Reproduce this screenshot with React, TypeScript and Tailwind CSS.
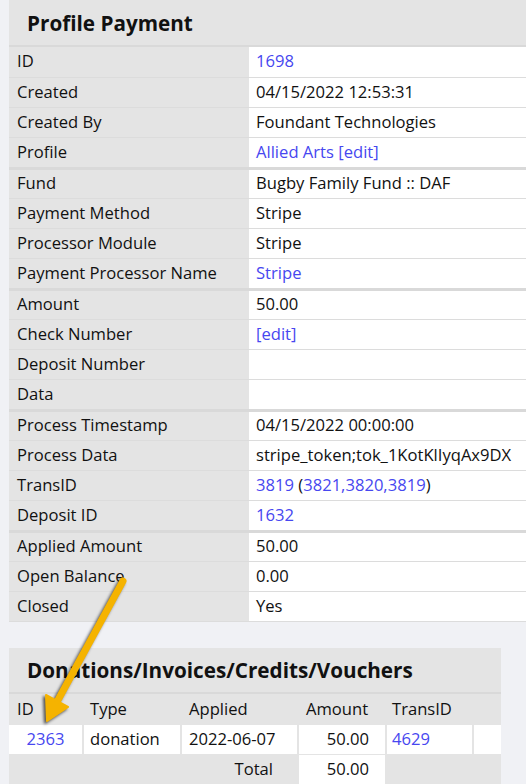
import React from "react";

interface Row {
  label: string;
  value: React.ReactNode;
  groupEnd?: boolean;
}

const Link: React.FC<{ children: React.ReactNode }> = ({ children }) => (
  <span className="text-[#4747f0]">{children}</span>
);

const rows: Row[] = [
  { label: "ID", value: <Link>1698</Link> },
  { label: "Created", value: "04/15/2022 12:53:31" },
  { label: "Created By", value: "Foundant Technologies" },
  { label: "Profile", value: <Link>Allied Arts [edit]</Link>, groupEnd: true },
  { label: "Fund", value: "Bugby Family Fund :: DAF" },
  { label: "Payment Method", value: "Stripe" },
  { label: "Processor Module", value: "Stripe" },
  { label: "Payment Processor Name", value: <Link>Stripe</Link>, groupEnd: true },
  { label: "Amount", value: "50.00" },
  { label: "Check Number", value: <Link>[edit]</Link> },
  { label: "Deposit Number", value: "" },
  { label: "Data", value: "", groupEnd: true },
  { label: "Process Timestamp", value: "04/15/2022 00:00:00" },
  { label: "Process Data", value: "stripe_token;tok_1KotKlIyqAx9DX" },
  {
    label: "TransID",
    value: (
      <>
        <Link>3819</Link> (<Link>3821,3820,3819</Link>)
      </>
    ),
  },
  { label: "Deposit ID", value: <Link>1632</Link>, groupEnd: true },
  { label: "Applied Amount", value: "50.00" },
  { label: "Open Balance", value: "0.00" },
  { label: "Closed", value: "Yes" },
];

const Arrow: React.FC = () => (
  <svg
    className="absolute left-0 top-0 pointer-events-none"
    width="526"
    height="784"
    viewBox="0 0 526 784"
    style={{ filter: "drop-shadow(-2px 2px 1.5px rgba(0,0,0,0.65))" }}
  >
    <line x1="123" y1="581" x2="58" y2="700" stroke="#f5b300" strokeWidth="7" strokeLinecap="round" />
    <polygon points="47,721 46,695 68,707" fill="#f5b300" stroke="#f5b300" strokeWidth="2" strokeLinejoin="round" />
  </svg>
);

export default function App() {
  return (
    <div className="relative w-[526px] h-[784px] overflow-hidden bg-[#f0f1f5] font-['Open_Sans',sans-serif] text-[16.6px] text-[#111]">
      <div className="pl-[9px]">
        {/* Profile Payment */}
        <section className="w-[560px]">
          <div className="h-[47px] bg-[#e4e4e4] border-b-2 border-[#d9d9d9] pl-[18px] pt-[3px] flex items-center">
            <h2 className="text-[20.7px] font-bold">Profile Payment</h2>
          </div>
          <table className="w-full table-fixed border-collapse">
            <colgroup>
              <col className="w-[240px]" />
              <col />
            </colgroup>
            <tbody>
              {rows.map((r) => (
                <tr
                  key={r.label}
                  className={r.groupEnd ? "border-b-[3px] border-[#d9d9d9]" : "border-b border-[#dcdcdc]"}
                >
                  <td className={`${r.groupEnd ? "h-[31px]" : "h-[30px]"} bg-[#e4e4e4] pl-[8px] py-0 whitespace-nowrap leading-none`}>
                    {r.label}
                  </td>
                  <td className={`${r.groupEnd ? "h-[31px]" : "h-[30px]"} bg-white pl-[7px] py-0 whitespace-nowrap overflow-hidden leading-none`}>
                    {r.value}
                  </td>
                </tr>
              ))}
            </tbody>
          </table>
        </section>

        <div className="h-[26px]" />

        {/* Donations/Invoices/Credits/Vouchers */}
        <section className="w-[492px] bg-[#e4e4e4]">
          <div className="h-[46px] border-b-2 border-[#d9d9d9] pl-[18px] pt-[3px] flex items-center">
            <h2 className="text-[20.7px] font-bold">Donations/Invoices/Credits/Vouchers</h2>
          </div>
          <table className="table-fixed border-separate border-spacing-x-[2px] border-spacing-y-[1px] -mx-[2px] w-[496px]">
            <colgroup>
              <col className="w-[73px]" />
              <col className="w-[96px]" />
              <col className="w-[115px]" />
              <col className="w-[86px]" />
              <col className="w-[85px]" />
              <col />
            </colgroup>
            <thead>
              <tr>
                <th className="h-[29px] text-left font-normal pl-[8px]">ID</th>
                <th className="h-[29px] text-left font-normal pl-[6px]">Type</th>
                <th className="h-[29px] text-left font-normal pl-[7px]">Applied</th>
                <th className="h-[29px] text-left font-normal pl-[7px]">Amount</th>
                <th className="h-[29px] text-left font-normal pl-[5px]">TransID</th>
                <th className="h-[29px]"></th>
              </tr>
            </thead>
            <tbody>
              <tr>
                <td className="h-[29px] bg-white text-center"><Link>2363</Link></td>
                <td className="h-[29px] bg-white pl-[6px]">donation</td>
                <td className="h-[29px] bg-white pl-[7px]">2022-06-07</td>
                <td className="h-[29px] bg-white text-right pr-[16px]">50.00</td>
                <td className="h-[29px] bg-white pl-[5px]"><Link>4629</Link></td>
                <td className="h-[29px] bg-white"></td>
              </tr>
              <tr>
                <td colSpan={3} className="h-[29px] text-right pr-[24px]">Total</td>
                <td className="h-[29px] bg-white text-right pr-[16px]">50.00</td>
                <td className="h-[29px]"></td>
                <td className="h-[29px]"></td>
              </tr>
            </tbody>
          </table>
        </section>
      </div>
      <Arrow />
    </div>
  );
}
